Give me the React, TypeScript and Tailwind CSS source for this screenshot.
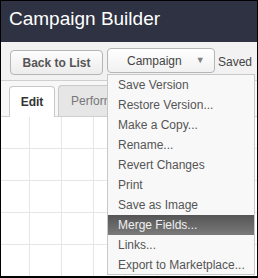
import React from "react";

const menuItems = [
  "Save Version",
  "Restore Version...",
  "Make a Copy...",
  "Rename...",
  "Revert Changes",
  "Print",
  "Save as Image",
  "Merge Fields...",
  "Links...",
  "Export to Marketplace...",
];

const App = () => {
  return (
    <div
      className="relative w-[258px] h-[278px] overflow-hidden border border-black border-b-2 bg-white flex flex-col"
      style={{ fontFamily: '"Liberation Sans", Arial, sans-serif' }}
    >
      <header className="h-[41px] shrink-0 bg-[#2f3242] pl-[8px] pt-[7px]">
        <h1 className="text-[19px] leading-[22px] text-white">Campaign Builder</h1>
      </header>

      <div className="h-[39px] shrink-0 bg-[#f2f2f2] border-b border-[#cfcfcf] flex items-start pl-[9px]">
        <button className="mt-[8px] w-[93px] h-[25px] rounded-[4px] border border-[#b5b5b5] bg-gradient-to-b from-[#fdfdfd] to-[#ececec] text-[12px] font-bold text-[#555] whitespace-nowrap">
          Back to List
        </button>
        <div className="relative ml-[4px] mt-[6px]">
          <button className="w-[108px] h-[25px] rounded-[4px] border border-[#b5b5b5] bg-gradient-to-b from-[#ffffff] to-[#f1f1f1] text-[12px] text-[#444] flex items-center pl-[19px]">
            <span>Campaign</span>
            <span className="ml-[14px] text-[9px] text-[#808080]">▼</span>
          </button>
          <ul className="absolute left-0 top-[26px] z-10 w-[148px] h-[201px] border border-[#c8c8c8] bg-[#f8f8f8]">
            {menuItems.map((item) => (
              <li
                key={item}
                className={
                  item === "Merge Fields..."
                    ? "h-[20px] pl-[10px] text-[12px] leading-[20px] whitespace-nowrap text-[#f0f0f0] bg-gradient-to-b from-[#555] to-[#7a7a7a]"
                    : "h-[20px] pl-[10px] text-[12px] leading-[20px] whitespace-nowrap text-[#555]"
                }
              >
                {item}
              </li>
            ))}
          </ul>
        </div>
        <span className="ml-[3px] mt-[11px] text-[12px] text-[#444]">Saved</span>
      </div>

      <div className="h-[36px] shrink-0 bg-[#f7f7f7] border-b border-[#cfcfcf] flex items-end pl-[8px] gap-[3px]">
        <div className="w-[46px] h-[31px] -mb-px rounded-t-[4px] border border-b-0 border-[#c8c8c8] bg-white flex items-center justify-center text-[12px] font-bold text-[#333]">
          Edit
        </div>
        <div className="w-[50px] h-[31px] overflow-hidden whitespace-nowrap rounded-tl-[4px] border border-b-0 border-r-0 border-[#c8c8c8] bg-[#e6e6e6] flex items-center pl-[12px] text-[12px] text-[#777]">
          Performance
        </div>
      </div>

      <div className="flex-1 bg-white bg-[linear-gradient(to_right,#e6e6e6_1px,transparent_1px),linear-gradient(to_bottom,#e6e6e6_1px,transparent_1px)] bg-[size:32px_32px] bg-[position:28px_31px]" />
    </div>
  );
};

export default App;
